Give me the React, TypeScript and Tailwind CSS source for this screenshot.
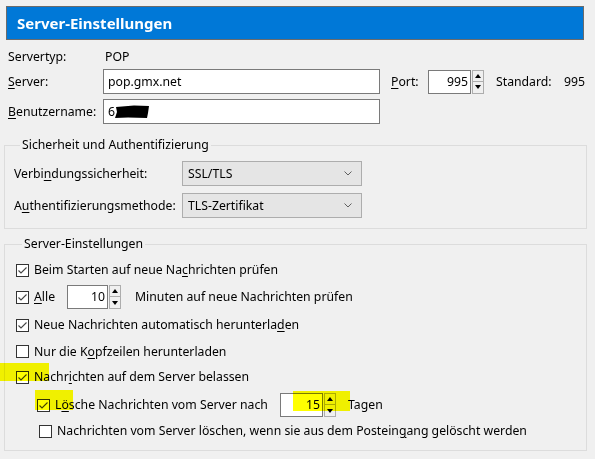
import React from 'react'

function Key({ children }: { children: React.ReactNode }) {
  return <span className="underline underline-offset-[2px] decoration-[1px]">{children}</span>
}

function Check({ checked }: { checked?: boolean }) {
  return (
    <span className="flex h-[13px] w-[13px] shrink-0 items-center justify-center border border-[#333] bg-white">
      {checked && (
        <svg width="11" height="11" viewBox="0 0 11 11">
          <polyline points="1.5,5.5 4,8 9.5,2.5" fill="none" stroke="#444" strokeWidth="1.1" />
        </svg>
      )}
    </span>
  )
}

function Spin({ value, w }: { value: string; w: string }) {
  return (
    <div className="flex h-[24px] items-stretch">
      <div className={`flex items-center justify-end border border-[#7a7a7a] bg-white pr-[2px] ${w}`}>{value}</div>
      <div className="ml-[1px] flex w-[12px] flex-col">
        <div className="flex h-[12px] items-center justify-center border border-[#adadad] bg-[#f0f0f0]">
          <svg width="6" height="4" viewBox="0 0 6 4">
            <polygon points="0,4 3,0 6,4" fill="#000" />
          </svg>
        </div>
        <div className="flex h-[12px] items-center justify-center border border-t-0 border-[#adadad] bg-[#f0f0f0]">
          <svg width="6" height="4" viewBox="0 0 6 4">
            <polygon points="0,0 6,0 3,4" fill="#000" />
          </svg>
        </div>
      </div>
    </div>
  )
}

function Combo({ value }: { value: string }) {
  return (
    <div className="flex h-[25px] w-[180px] items-center justify-between border border-[#adadad] bg-[#e5e5e5] pl-[5px] pr-[9px]">
      <span>{value}</span>
      <svg width="8" height="5" viewBox="0 0 8 5">
        <polyline points="0.5,0.5 4,4 7.5,0.5" fill="none" stroke="#606060" strokeWidth="1" />
      </svg>
    </div>
  )
}

export default function App() {
  return (
    <div className="relative h-[459px] w-[595px] overflow-hidden bg-[#f0f0f0] pt-[6px] font-['Noto_Sans',sans-serif] text-[12.25px] leading-[16px] text-black">
      <div className="mx-[6px] flex h-[34px] w-[578px] items-center border border-[#6b6b6b] bg-[#0078d7] pl-[10px] text-[15px] font-bold text-white">
        Server-Einstellungen
      </div>

      <div className="mt-[8px] flex h-[18px] items-center pl-[8px]">
        <span className="w-[97px]">Servertyp:</span>
        <span>POP</span>
      </div>

      <div className="mt-[3px] flex h-[25px] items-center pl-[8px]">
        <span className="w-[95px]">
          <Key>S</Key>erver:
        </span>
        <div className="flex h-[25px] w-[277px] items-center border border-[#7a7a7a] bg-white pl-[4px]">pop.gmx.net</div>
        <span className="ml-[11px] w-[37px]">
          <Key>P</Key>ort:
        </span>
        <Spin value="995" w="w-[43px]" />
        <span className="ml-[12px] w-[68px]">Standard:</span>
        <span>995</span>
      </div>

      <div className="mt-[5px] flex h-[25px] items-center pl-[8px]">
        <span className="w-[95px]">
          <Key>B</Key>enutzername:
        </span>
        <div className="flex h-[25px] w-[277px] items-center border border-[#7a7a7a] bg-white pl-[4px]">
          <span>6</span>
          <svg width="36" height="15" viewBox="0 0 36 15" className="-ml-[1px]">
            <path d="M2,3 L20,1.5 L35,2 L34,9 L33,14 L14,13.5 L1,14 L3,8 Z" fill="#000" />
          </svg>
        </div>
      </div>

      <fieldset className="ml-[4px] mt-[13px] w-[583px] border border-[#dcdcdc] pb-[10px] pl-[9px] pt-[8px]">
        <legend className="ml-[6px] px-[2px]">Sicherheit und Authentifizierung</legend>
        <div className="flex items-center">
          <span className="w-[168px]">
            Verbi<Key>n</Key>dungssicherheit:
          </span>
          <Combo value="SSL/TLS" />
        </div>
        <div className="mt-[7px] flex items-center">
          <span className="w-[168px]">
            A<Key>u</Key>thentifizierungsmethode:
          </span>
          <Combo value="TLS-Zertifikat" />
        </div>
      </fieldset>

      <fieldset className="ml-[4px] mt-[7px] w-[583px] border border-[#dcdcdc] pb-[8px] pl-[11px] pt-[5px]">
        <legend className="ml-[6px] px-[2px]">Server-Einstellungen</legend>
        <div className="flex h-[26px] items-center gap-[5px]">
          <Check checked />
          <span>
            Beim Starten auf neue Na<Key>c</Key>hrichten prüfen
          </span>
        </div>
        <div className="flex h-[28px] items-center">
          <Check checked />
          <span className="ml-[5px] w-[33px]">
            <Key>A</Key>lle
          </span>
          <Spin value="10" w="w-[41px]" />
          <span className="ml-[14px]">Minuten auf neue Nachrichten prüfen</span>
        </div>
        <div className="flex h-[28px] items-center gap-[5px]">
          <Check checked />
          <span>
            Neue Nachrichten automatisch herunterla<Key>d</Key>en
          </span>
        </div>
        <div className="flex h-[25px] items-center gap-[5px]">
          <Check />
          <span>
            Nur die K<Key>o</Key>pfzeilen herunterladen
          </span>
        </div>
        <div className="flex h-[26px] items-center gap-[5px]">
          <Check checked />
          <span>
            Nachr<Key>i</Key>chten auf dem Server belassen
          </span>
        </div>
        <div className="flex h-[30px] items-center pl-[21px]">
          <Check checked />
          <span className="ml-[5px] w-[225px]">
            L<Key>ö</Key>sche Nachrichten vom Server nach
          </span>
          <Spin value="15" w="w-[43px]" />
          <span className="ml-[12px]">Tagen</span>
        </div>
        <div className="flex h-[22px] items-center gap-[5px] pl-[23px]">
          <Check />
          <span>
            Nachrichten vom Server löschen, wenn sie aus dem Postein<Key>g</Key>ang gelöscht werden
          </span>
        </div>
      </fieldset>

      <div className="pointer-events-none absolute left-0 top-[363px] h-[18px] w-[49px] bg-[#ffff00] mix-blend-multiply" />
      <div className="pointer-events-none absolute left-[35px] top-[390px] h-[20px] w-[38px] bg-[#ffff00] mix-blend-multiply" />
      <div className="pointer-events-none absolute left-[293px] top-[391px] h-[20px] w-[57px] bg-[#ffff00] mix-blend-multiply" />
    </div>
  )
}
